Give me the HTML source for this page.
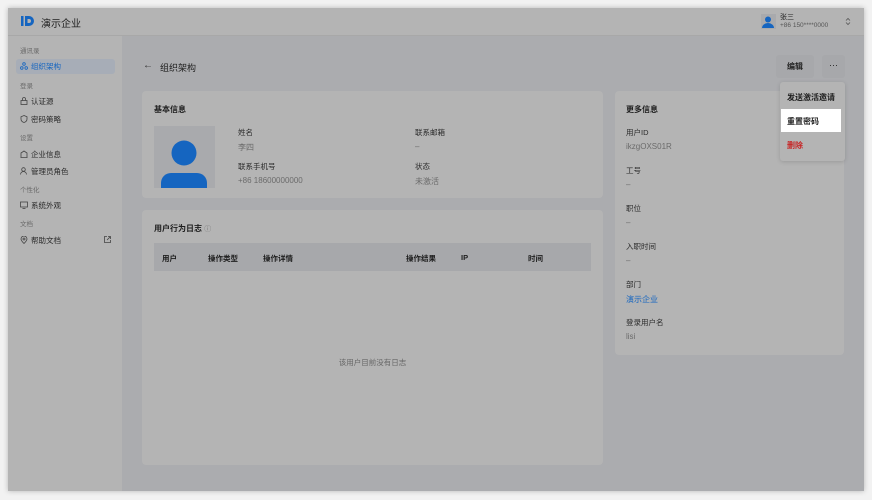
<!DOCTYPE html>
<html><head><meta charset="utf-8"><style>
*{margin:0;padding:0;box-sizing:border-box}
body{width:872px;height:500px;background:#f2f2f2;font-family:"Liberation Sans","Noto Sans CJK SC",sans-serif;position:relative;overflow:hidden;font-size:8px;color:#222}
.win{position:absolute;left:8px;top:8px;width:856px;height:483px;background:#abacaf;box-shadow:0 0 5px rgba(0,0,0,.25);overflow:hidden}
.hdr{position:absolute;left:0;top:0;width:856px;height:28px;background:#b4b4b4;border-bottom:1px solid #a8a8a8}
.side{position:absolute;left:0;top:28px;width:114px;height:455px;background:#b4b4b4}
.a{position:absolute;white-space:nowrap}
.grp{color:#6a6a6a;font-size:6.5px}
.it{color:#2a2a2a;font-size:7.5px;left:23px}
.ic{position:absolute;left:12px}
.card{position:absolute;background:#b4b4b4;border-radius:4px}
.lbl{color:#2a2a2a;font-size:7.5px}
.val{color:#6b6b6b;font-size:8px}
.b{font-weight:bold;color:#1e1e1e}
</style></head><body>
<div class="win">
<div class="hdr">
 <svg class="a" style="left:13px;top:8px" width="13" height="10" viewBox="0 0 13 10"><rect x="0" y="0" width="2.5" height="10" fill="#1565c0"/><path d="M4 0h4a5 5 0 0 1 0 10H4z" fill="#1565c0"/><path d="M6.5 3h1.5a2 2 0 0 1 0 4H6.5z" fill="#b4b4b4"/></svg>
 <div class="a" style="left:33px;top:7px;font-size:10px;color:#1e1e1e">演示企业</div>
 <div class="a" style="left:753px;top:6px;width:15px;height:15px;background:#a9aaad"></div>
 <svg class="a" style="left:754px;top:8px" width="12" height="12" viewBox="0 0 12 12"><circle cx="6" cy="3.5" r="3" fill="#1565c0"/><path d="M0 12a6 5 0 0 1 12 0z" fill="#1565c0"/></svg>
 <div class="a" style="left:772px;top:4px;font-size:7px;color:#222">张三</div>
 <div class="a" style="left:772px;top:14px;font-size:6.5px;color:#555">+86 150****0000</div>
 <svg class="a" style="left:837px;top:9px" width="6" height="9" viewBox="0 0 6 9"><path d="M1 3.5L3 1.5L5 3.5M1 5.5L3 7.5L5 5.5" fill="none" stroke="#555" stroke-width=".8"/></svg>
</div>
<div class="side">
 <div class="a grp" style="left:12px;top:9px">通讯录</div>
 <div class="a" style="left:8px;top:23px;width:99px;height:15px;background:#a7adb7;border-radius:3px"></div>
 <svg class="ic" style="top:26px" width="8" height="8" viewBox="0 0 8 8"><g fill="none" stroke="#1565c0" stroke-width=".8"><circle cx="4" cy="2" r="1.3"/><circle cx="1.8" cy="6" r="1.3"/><circle cx="6.2" cy="6" r="1.3"/></g></svg>
 <div class="a it" style="top:25px;color:#1565c0">组织架构</div>
 <div class="a grp" style="left:12px;top:44px">登录</div>
 <svg class="ic" style="top:61px" width="8" height="8" viewBox="0 0 8 8"><g fill="none" stroke="#444" stroke-width=".8"><rect x="1" y="3.5" width="6" height="4"/><path d="M2.5 3.5V2a1.5 1.5 0 0 1 3 0v1.5"/></g></svg>
 <div class="a it" style="top:60px">认证源</div>
 <svg class="ic" style="top:79px" width="8" height="8" viewBox="0 0 8 8"><path d="M4 .5L7 1.8V4c0 2-1.5 3-3 3.5C2.5 7 1 6 1 4V1.8z" fill="none" stroke="#444" stroke-width=".8"/></svg>
 <div class="a it" style="top:78px">密码策略</div>
 <div class="a grp" style="left:12px;top:96px">设置</div>
 <svg class="ic" style="top:114px" width="8" height="8" viewBox="0 0 8 8"><path d="M.5 7.5h7M1 7.5V3l3-2 3 2v4.5" fill="none" stroke="#444" stroke-width=".8"/></svg>
 <div class="a it" style="top:113px">企业信息</div>
 <svg class="ic" style="top:131px" width="8" height="8" viewBox="0 0 8 8"><g fill="none" stroke="#444" stroke-width=".8"><circle cx="3.5" cy="2.5" r="1.8"/><path d="M.5 7.5a3 3 0 0 1 6 0"/></g></svg>
 <div class="a it" style="top:130px">管理员角色</div>
 <div class="a grp" style="left:12px;top:148px">个性化</div>
 <svg class="ic" style="top:165px" width="8" height="8" viewBox="0 0 8 8"><g fill="none" stroke="#444" stroke-width=".8"><rect x=".5" y="1" width="7" height="5"/><path d="M2.5 7.5h3"/></g></svg>
 <div class="a it" style="top:164px">系统外观</div>
 <div class="a grp" style="left:12px;top:182px">文档</div>
 <svg class="ic" style="top:200px" width="8" height="8" viewBox="0 0 8 8"><g fill="none" stroke="#444" stroke-width=".8"><path d="M4 7.5C2 5.5 1 4.3 1 3a3 3 0 0 1 6 0c0 1.3-1 2.5-3 4.5z"/><circle cx="4" cy="3" r="1"/></g></svg>
 <div class="a it" style="top:199px">帮助文档</div>
 <svg class="a" style="left:96px;top:200px" width="7" height="7" viewBox="0 0 7 7"><path d="M3 .5H.5v6h6V4M4 .5h2.5V3M6.5.5L3 4" fill="none" stroke="#444" stroke-width=".8"/></svg>
</div>
<div class="a" style="left:135px;top:52px;font-size:10px;color:#333">←</div>
<div class="a" style="left:152px;top:53px;font-size:9px;color:#222">组织架构</div>
<div class="a" style="left:768px;top:47px;width:38px;height:23px;background:#a7a8ab;border-radius:3px;text-align:center;line-height:23px;font-size:8px" ><b>编辑</b></div>
<div class="a" style="left:814px;top:47px;width:23px;height:23px;background:#a7a8ab;border-radius:3px;text-align:center;line-height:20px;font-size:9px">···</div>

<div class="card" style="left:134px;top:83px;width:461px;height:107px">
 <div class="a b" style="left:12px;top:13px;font-size:8px">基本信息</div>
 <div class="a" style="left:12px;top:35px;width:61px;height:62px;background:#a9aaad;overflow:hidden">
  <svg width="61" height="62" viewBox="0 0 61 62"><circle cx="30" cy="27" r="12.5" fill="#1565c0"/><path d="M7 62v-5a10 10 0 0 1 10-10h26a10 10 0 0 1 10 10v5z" fill="#1565c0"/></svg>
 </div>
 <div class="a lbl" style="left:96px;top:36px">姓名</div>
 <div class="a val" style="left:96px;top:51px">李四</div>
 <div class="a lbl" style="left:96px;top:70px">联系手机号</div>
 <div class="a val" style="left:96px;top:85px">+86 18600000000</div>
 <div class="a lbl" style="left:273px;top:36px">联系邮箱</div>
 <div class="a val" style="left:273px;top:51px">–</div>
 <div class="a lbl" style="left:273px;top:70px">状态</div>
 <div class="a val" style="left:273px;top:85px">未激活</div>
</div>

<div class="card" style="left:134px;top:202px;width:461px;height:255px">
 <div class="a b" style="left:12px;top:13px;font-size:8px">用户行为日志 <span style="font-weight:normal;color:#777;font-size:7px">ⓘ</span></div>
 <div class="a" style="left:12px;top:33px;width:437px;height:28px;background:#a7a8ab"></div>
 <div class="a b" style="left:20px;top:43px;font-size:7.5px">用户</div>
 <div class="a b" style="left:66px;top:43px;font-size:7.5px">操作类型</div>
 <div class="a b" style="left:121px;top:43px;font-size:7.5px">操作详情</div>
 <div class="a b" style="left:264px;top:43px;font-size:7.5px">操作结果</div>
 <div class="a b" style="left:319px;top:43px;font-size:7.5px">IP</div>
 <div class="a b" style="left:386px;top:43px;font-size:7.5px">时间</div>
 <div class="a" style="left:0;width:461px;top:147px;text-align:center;color:#666;font-size:7.5px">该用户目前没有日志</div>
</div>

<div class="card" style="left:607px;top:83px;width:229px;height:264px">
 <div class="a b" style="left:11px;top:13px;font-size:8px">更多信息</div>
 <div class="a lbl" style="left:11px;top:36px">用户ID</div>
 <div class="a val" style="left:11px;top:51px">ikzgOXS01R</div>
 <div class="a lbl" style="left:11px;top:74px">工号</div>
 <div class="a val" style="left:11px;top:89px">–</div>
 <div class="a lbl" style="left:11px;top:112px">职位</div>
 <div class="a val" style="left:11px;top:127px">–</div>
 <div class="a lbl" style="left:11px;top:150px">入职时间</div>
 <div class="a val" style="left:11px;top:165px">–</div>
 <div class="a lbl" style="left:11px;top:188px">部门</div>
 <div class="a val" style="left:11px;top:203px;color:#1565c0">演示企业</div>
 <div class="a lbl" style="left:11px;top:226px">登录用户名</div>
 <div class="a val" style="left:11px;top:241px">lisi</div>
</div>

<div class="a" style="left:772px;top:74px;width:65px;height:79px;background:#b4b4b4;border-radius:3px;box-shadow:0 1px 4px rgba(0,0,0,.15)">
 <div class="a b" style="left:7px;top:10px;font-size:8px;font-weight:bold">发送激活邀请</div>
 <div class="a" style="left:1px;top:27px;width:60px;height:23px;background:#fff"></div>
 <div class="a b" style="left:7px;top:34px;font-size:8px">重置密码</div>
 <div class="a" style="left:7px;top:58px;font-size:8px;font-weight:bold;color:#c62828">删除</div>
</div>
</div>
</body></html>
